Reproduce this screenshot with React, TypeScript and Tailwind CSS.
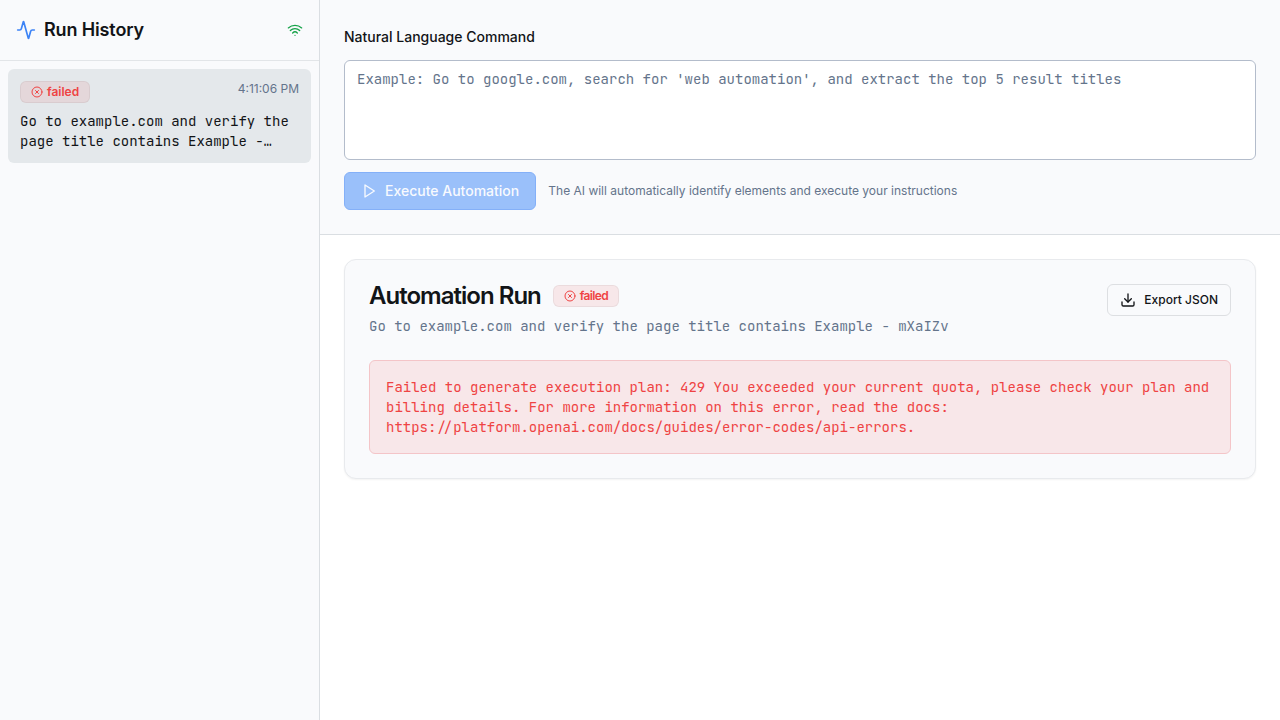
import { Activity, CircleX, Download, Wifi } from "lucide-react";

function FailedBadge() {
  return (
    <span className="inline-flex items-center gap-1 whitespace-nowrap rounded-md border border-black/[0.05] bg-[#ef4343]/10 px-2.5 py-0.5 text-xs leading-4 font-semibold text-[#ef4343]">
      <CircleX className="size-3" />
      failed
    </span>
  );
}

function PlayIcon() {
  return (
    <svg
      className="size-4 shrink-0"
      viewBox="0 0 24 24"
      fill="none"
      stroke="currentColor"
      strokeWidth="2"
      strokeLinecap="round"
      strokeLinejoin="round"
    >
      <polygon points="6 3 20 12 6 21 6 3" />
    </svg>
  );
}

export default function App() {
  return (
    <div className="flex h-screen w-full overflow-hidden bg-white font-['Inter',sans-serif] text-[#121417]">
      <aside className="flex w-80 shrink-0 flex-col border-r border-[#dadee2] bg-[#f9fafc]">
        <header className="flex h-[61px] items-center justify-between border-b border-[#e2e5e8] px-4">
          <h2 className="flex items-center gap-2 text-lg font-semibold tracking-[-0.14px]">
            <Activity className="size-5 text-[#3c83f6]" />
            Run History
          </h2>
          <Wifi className="size-4 text-[#16a249]" />
        </header>
        <div className="p-2">
          <div className="rounded-md bg-[#e4e8eb] p-3">
            <div className="mb-2 flex items-start justify-between">
              <FailedBadge />
              <span className="text-xs text-[#64748b]">4:11:06 PM</span>
            </div>
            <p className="line-clamp-2 font-['JetBrains_Mono','Liberation_Mono',monospace] text-sm">
              Go to example.com and verify the page title contains Example -…
            </p>
          </div>
        </div>
      </aside>

      <main className="flex min-w-0 flex-1 flex-col">
        <section className="border-b border-[#dadee2] bg-[#f9fafc] px-6 pt-[27px] pb-6">
          <label htmlFor="command" className="mb-[13px] block text-sm font-medium">
            Natural Language Command
          </label>
          <textarea
            id="command"
            className="block h-[100px] w-full resize-none rounded-md border border-[#b3bccb] bg-white px-3 py-2 font-['JetBrains_Mono','Liberation_Mono',monospace] text-sm placeholder:text-[#64748b]"
            placeholder="Example: Go to google.com, search for 'web automation', and extract the top 5 result titles"
          />
          <div className="mt-3 flex items-center gap-3">
            <button className="flex h-[38px] w-[192.3px] items-center gap-2 whitespace-nowrap rounded-md border border-[#84b0f8] bg-[#9ac0fa] px-4 text-sm font-medium text-[#f8fafe]">
              <PlayIcon />
              Execute Automation
            </button>
            <span className="text-xs text-[#64748b]">
              The AI will automatically identify elements and execute your instructions
            </span>
          </div>
        </section>

        <section className="p-6">
          <div className="rounded-xl border border-[#e8eaed] bg-[#f9fafc] p-6 shadow-[0_1px_2px_rgba(0,0,0,0.05)]">
            <div className="flex items-start justify-between">
              <div>
                <h1 className="flex h-6 items-center gap-3 text-2xl leading-none font-semibold tracking-[-0.65px]">
                  <span className="tracking-[-0.98px]">Automation Run</span>
                  <FailedBadge />
                </h1>
                <p className="mt-2 font-['JetBrains_Mono','Liberation_Mono',monospace] text-sm text-[#64748b]">
                  Go to example.com and verify the page title contains Example - mXaIZv
                </p>
              </div>
              <button className="flex h-8 items-center gap-2 whitespace-nowrap rounded-md border border-[#dddfe2] px-3 text-xs font-medium">
                <Download className="size-4" />
                Export JSON
              </button>
            </div>
            <div className="mt-6 rounded-md border border-[#f4c5c8] bg-[#f8e7e9] p-4 font-['JetBrains_Mono','Liberation_Mono',monospace] text-sm text-[#ef4343]">
              Failed to generate execution plan: 429 You exceeded your current quota, please check your plan and billing details. For more information on this error, read the docs: https://platform.openai.com/docs/guides/error-codes/api-errors.
            </div>
          </div>
        </section>
      </main>
    </div>
  );
}
